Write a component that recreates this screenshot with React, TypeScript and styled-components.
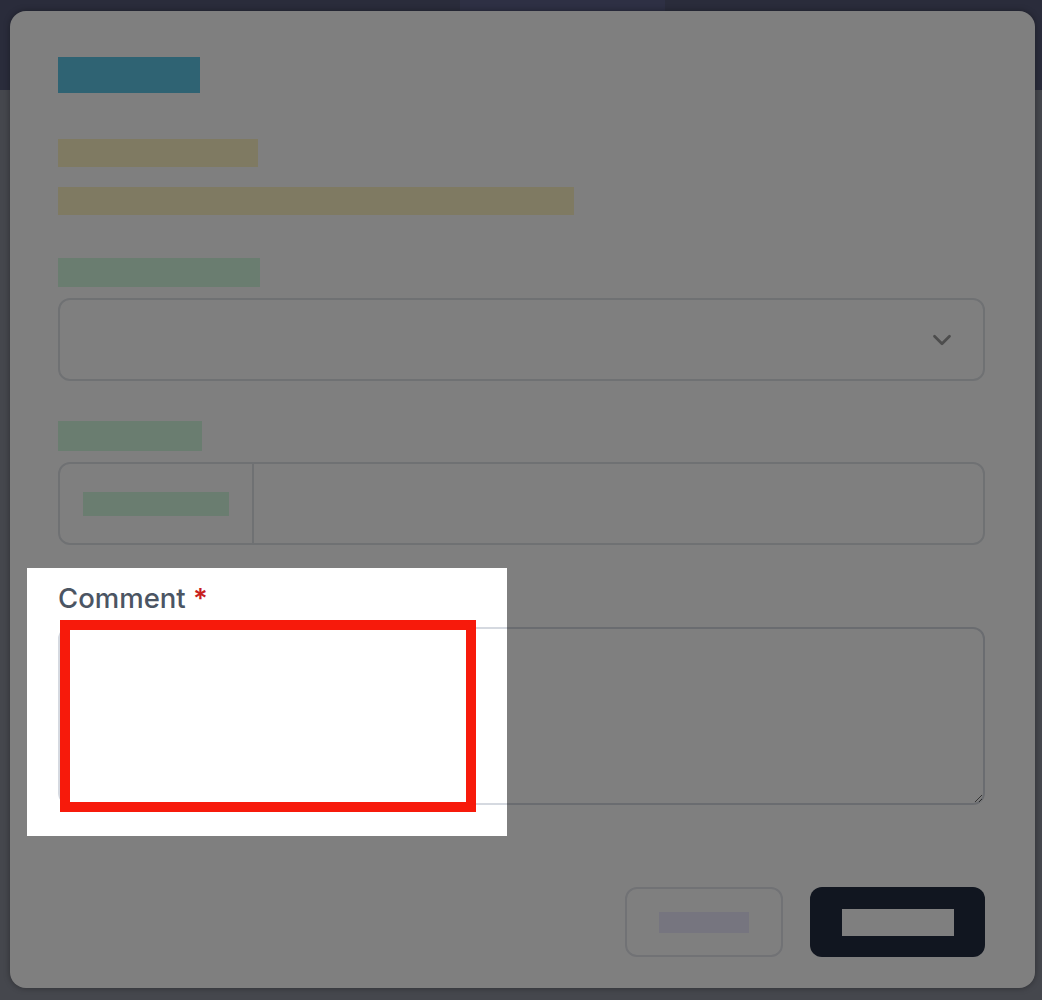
import styled, { createGlobalStyle } from "styled-components";
import { ChevronDown } from "lucide-react";

const GlobalStyle = createGlobalStyle`
  html, body {
    margin: 0;
    height: 100%;
    overflow: hidden;
  }
  body {
    font-family: Inter, "Noto Sans", sans-serif;
    background: #8a8e9a;
  }
  #root {
    height: 100%;
  }
`;

const Page = styled.div`
  height: 100%;
  display: flex;
  flex-direction: column;
  position: relative;
`;

const TopBar = styled.header`
  height: 90px;
  flex: none;
  display: flex;
  padding-left: 460px;
  background: #545876;
`;

const ActiveTab = styled.div`
  width: 205px;
  background: #5c6088;
`;

const Backdrop = styled.main`
  flex: 1;
  background: #8a8e9a;
`;

const Modal = styled.div`
  position: absolute;
  top: 11px;
  left: 10px;
  right: 7px;
  bottom: 12px;
  box-sizing: border-box;
  padding: 46px 50px 0 48px;
  display: flex;
  flex-direction: column;
  background: #ffffff;
  border-radius: 16px;
  box-shadow: 0 0 6px rgba(0, 0, 0, 0.35);
`;

// blurred text stand-ins
const Bar = styled.span<{ $w: number; $h: number; $c: string }>`
  display: block;
  flex: none;
  width: ${({ $w }) => $w}px;
  height: ${({ $h }) => $h}px;
  background: ${({ $c }) => $c};
  filter: blur(0.6px);
`;

const Description = styled.div`
  display: flex;
  flex-direction: column;
  gap: 20px;
  margin: 46px 0 43px;
`;

const Field = styled.div<{ $mb?: number }>`
  display: flex;
  flex-direction: column;
  gap: 11px;
  margin-bottom: ${({ $mb }) => $mb ?? 0}px;
`;

const Label = styled.label`
  font-size: 27.5px;
  line-height: 36px;
  font-weight: 500;
  color: #4b5563;

  span {
    color: #c81e1e;
    font-weight: 600;
  }
`;

const SelectBox = styled.div`
  height: 83px;
  box-sizing: border-box;
  display: flex;
  align-items: center;
  justify-content: flex-end;
  padding-right: 26px;
  border: 2px solid #dfe2e7;
  border-radius: 12px;
  color: #9a9a9a;
`;

const InputGroup = styled.div`
  height: 83px;
  box-sizing: border-box;
  display: flex;
  border: 2px solid #dfe2e7;
  border-radius: 12px;
  overflow: hidden;
`;

const Addon = styled.div`
  width: 194px;
  display: flex;
  align-items: center;
  padding-left: 23px;
  box-sizing: border-box;
  border-right: 2px solid #dfe2e7;
`;

const Input = styled.input`
  flex: 1;
  border: none;
  outline: none;
  background: transparent;
`;

const TextArea = styled.textarea`
  display: block;
  width: 100%;
  height: 178px;
  box-sizing: border-box;
  border: 2px solid #d5d9e0;
  border-radius: 12px;
  resize: vertical;
  font-family: inherit;
  outline: none;
`;

const Footer = styled.div`
  display: flex;
  justify-content: flex-end;
  gap: 27px;
  margin-top: 82px;
`;

const Button = styled.button<{ $primary?: boolean }>`
  height: 70px;
  width: ${({ $primary }) => ($primary ? 175 : 158)}px;
  display: flex;
  align-items: center;
  justify-content: center;
  padding: 0;
  border-radius: 12px;
  border: ${({ $primary }) => ($primary ? "none" : "2px solid #e2e4ea")};
  background: ${({ $primary }) => ($primary ? "#222c40" : "#ffffff")};
`;

const Spotlight = styled.div`
  position: absolute;
  left: 27px;
  top: 568px;
  width: 480px;
  height: 268px;
  box-shadow: 0 0 0 2000px rgba(0, 0, 0, 0.5);
  pointer-events: none;
`;

const Marker = styled.div`
  position: absolute;
  left: 60px;
  top: 620px;
  width: 416px;
  height: 192px;
  box-sizing: border-box;
  border: 10px solid #f71a0b;
  pointer-events: none;
`;

export default function App() {
  return (
    <Page>
      <GlobalStyle />
      <TopBar>
        <ActiveTab />
      </TopBar>
      <Backdrop />

      <Modal>
        <Bar $w={142} $h={36} $c="#5ec6e6" />
        <Description>
          <Bar $w={200} $h={28} $c="#fef4c4" />
          <Bar $w={516} $h={28} $c="#fef4c4" />
        </Description>

        <Field $mb={40}>
          <Bar $w={202} $h={29} $c="#d4fae0" />
          <SelectBox>
            <ChevronDown size={30} strokeWidth={2.2} />
          </SelectBox>
        </Field>

        <Field $mb={35}>
          <Bar $w={144} $h={30} $c="#d4fae0" />
          <InputGroup>
            <Addon>
              <Bar $w={146} $h={24} $c="#d4fae0" />
            </Addon>
            <Input />
          </InputGroup>
        </Field>

        <Field>
          <Label>
            Comment <span>*</span>
          </Label>
          <TextArea />
        </Field>

        <Footer>
          <Button>
            <Bar $w={90} $h={21} $c="#eceaff" />
          </Button>
          <Button $primary>
            <Bar $w={112} $h={27} $c="#ffffff" />
          </Button>
        </Footer>
      </Modal>

      <Spotlight />
      <Marker />
    </Page>
  );
}
